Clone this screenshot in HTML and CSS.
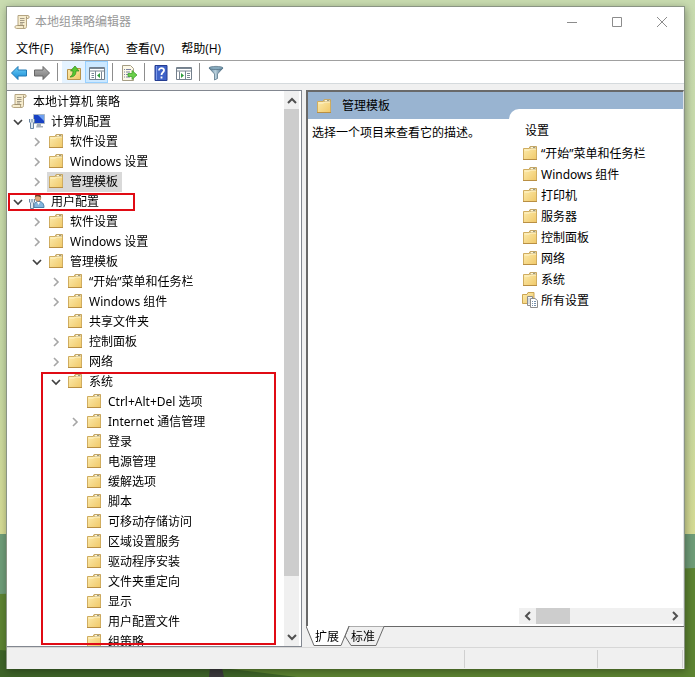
FILE: index.html
```html
<!DOCTYPE html>
<html lang="zh-CN">
<head>
    <meta charset="UTF-8">
    <meta name="viewport" content="width=device-width, initial-scale=1.0">
    <title>本地组策略编辑器</title>
    <link rel="stylesheet" href="styles.css">
</head>
<body>
    <!-- shared icons -->
    <svg class="defs" width="0" height="0">
        <defs>
            <linearGradient id="gFolder" x1="0" y1="0" x2="1" y2="1">
                <stop offset="0" stop-color="#fdedb0"/>
                <stop offset="1" stop-color="#f0c868"/>
            </linearGradient>
            <linearGradient id="gBlue" x1="0" y1="0" x2="0" y2="1">
                <stop offset="0" stop-color="#6fd0f8"/>
                <stop offset="1" stop-color="#1689d4"/>
            </linearGradient>
            <linearGradient id="gGrey" x1="0" y1="0" x2="0" y2="1">
                <stop offset="0" stop-color="#b5b5b5"/>
                <stop offset="1" stop-color="#777777"/>
            </linearGradient>
            <linearGradient id="gSteel" x1="0" y1="0" x2="1" y2="0">
                <stop offset="0" stop-color="#4e7590"/>
                <stop offset=".45" stop-color="#bcd3df"/>
                <stop offset="1" stop-color="#3f6580"/>
            </linearGradient>
        </defs>
        <symbol id="folder" viewBox="0 0 16 16">
            <path d="M1.500 3.500H7l1-2h6.500v13h-13z" fill="url(#gFolder)" stroke="#d0ad60"/>
            <path d="M8.500 1.500h5.500v2H7.800z" fill="#fff6d5" stroke="#b99b5a" stroke-width=".8"/>
            <path d="M11 2.500h2" stroke="#9a9a80"/>
            <path d="M2.500 5h5l1-1H14" fill="none" stroke="#fff5cf"/>
            <path d="M1 14.500h14" stroke="#b98f43"/>
        </symbol>
        <symbol id="scroll" viewBox="0 0 16 16">
            <path d="M4 1.500h10c1.500 0 1.500 3 0 3h-1.500v8c0 1.500-1 2-2 2h-8c-2 0-2-3 0-3H4z" fill="#f6eccd" stroke="#b5a582"/>
            <path d="M4 11.500h6c-1 1-.5 2.500.5 3M12.500 4.500v-2" fill="none" stroke="#a29372"/>
            <path d="M6 4.500h4.500M6 6.500h4.500M6 8.500h4.500M6 10h3" stroke="#8f8674" stroke-width=".8"/>
        </symbol>
        <symbol id="computer" viewBox="0 0 16 16">
            <path d="M4.500 1.500h11v9h-11z" fill="#1741c4" stroke="#a9b6c4"/>
            <path d="M9 2h6v6z" fill="#6fa0f0"/>
            <path d="M8 11h4v2h2v1.500H7z" fill="#a5afb9"/>
            <path d="M.5 6v3l1 1v5.500h3V10l1-1V6M3 6v3.500" fill="#dfe8ef" stroke="#6b87a2"/>
        </symbol>
        <symbol id="user" viewBox="0 0 16 16">
            <path d="M5 14.500c0-5 2-6 5-6s5 2 5 6z" fill="#83b5dd" stroke="#4d80aa"/>
            <ellipse cx="9" cy="4.800" rx="2.800" ry="3.500" fill="#dca97d" stroke="#9a6d4b" stroke-width=".6"/>
            <path d="M6 4c0-5 6-4 6 .5C10 3.500 8 2.500 6 4z" fill="#65442d"/>
            <path d="M8 9l1.500 3L11 9z" fill="#fff"/>
            <path d="M.5 6v3l1 1v5.500h3V10l1-1V6M3 6v3.500" fill="#dfe8ef" stroke="#6b87a2"/>
        </symbol>
        <symbol id="allset" viewBox="0 0 16 16">
            <path d="M.5 2.500H5l1-2h6v11H.5z" fill="url(#gFolder)" stroke="#cba553"/>
            <path d="M5.500 4.500h5v9h-5z" fill="#f7f7f7" stroke="#8c8c8c"/>
            <path d="M8.500 6.500H13l2.500 2v7h-7z" fill="#fff" stroke="#8c8c8c"/>
            <path d="M10 9.500h1M12 9.500h2M10 11.500h1M12 11.500h2M10 13.500h1M12 13.500h2M6.500 7h1M6.500 9h1M6.500 11h1" stroke="#7690aa"/>
        </symbol>
        <symbol id="right" viewBox="0 0 12 12">
            <path d="M4 2l4 4-4 4" fill="none" stroke="#a6a6a6" stroke-width="1.600"/>
        </symbol>
        <symbol id="down" viewBox="0 0 12 12">
            <path d="M2 4l4 4 4-4" fill="none" stroke="#404040" stroke-width="1.700"/>
        </symbol>
    </svg>

    <!-- desktop wallpaper -->
    <svg class="wallpaper" viewBox="0 0 695 677" preserveAspectRatio="none">
        <defs>
            <linearGradient id="gSky" x1="0" y1="0" x2="0" y2="1">
                <stop offset="0" stop-color="#c9dcb0"/>
                <stop offset=".7" stop-color="#c6d9a4"/>
                <stop offset="1" stop-color="#d6dc94"/>
            </linearGradient>
        </defs>
        <path d="M0 0h695v535H0z" fill="url(#gSky)"/>
        <path d="M0 534h695v70H0z" fill="#6f9d78"/>
        <path d="M0 594l695-26v109H0z" fill="#5d8432"/>
        <path d="M0 650l222 18 75 9H0z" fill="#3e6428"/>
        <path d="M210 668h12l2 9h-15z" fill="#3b393c"/>
    </svg>

    <div class="window">
        <div class="titlebar">
            <svg class="icon"><use href="#scroll"/></svg>
            <span class="title">本地组策略编辑器</span>
            <button class="winbtn" aria-label="最小化"><svg width="12" height="12"><path d="M1 6.500h10"/></svg></button>
            <button class="winbtn" aria-label="最大化"><svg width="12" height="12"><path d="M1.500 1.500h9v9h-9z"/></svg></button>
            <button class="winbtn" aria-label="关闭"><svg width="12" height="12"><path d="M1 1l10 10M11 1L1 11"/></svg></button>
        </div>

        <div class="menubar">
            <button>文件(F)</button>
            <button>操作(A)</button>
            <button>查看(V)</button>
            <button>帮助(H)</button>
        </div>

        <div class="toolbar">
            <button class="tool" aria-label="后退">
                <svg class="icon" viewBox="0 0 16 16"><path d="M.5 8L7 1.500V5h8.500v6H7v3.500z" fill="url(#gBlue)" stroke="#2379b4"/></svg>
            </button>
            <button class="tool" aria-label="前进">
                <svg class="icon" viewBox="0 0 16 16"><path d="M15.500 8L9 1.500V5H.5v6H9v3.500z" fill="url(#gGrey)" stroke="#666"/></svg>
            </button>
            <span class="sep"></span>
            <button class="tool hot" aria-label="上一级">
                <svg class="icon" viewBox="0 0 16 16">
                    <path d="M1.500 4.500H6l1-1h7.500v11h-13z" fill="url(#gFolder)" stroke="#b8934a"/>
                    <path d="M4 12c2-1 3-3 3-6H4.500L9 1l4 5h-3c0 4-2 6-6 6z" fill="#58c832" stroke="#2f8a1b" stroke-width=".7"/>
                </svg>
            </button>
            <button class="tool on" aria-label="显示/隐藏控制台树">
                <svg class="icon" viewBox="0 0 16 16">
                    <path d="M.5 2.500h15v12H.5z" fill="#fff" stroke="#74808c"/>
                    <path d="M1 3.500h14M1 6h14" stroke="#7a8794"/>
                    <path d="M6.500 6v8M2.500 8.500h2.500M2.500 10.500h2.500M2.500 12.500h2.500M12.500 6.500v8" stroke="#7a8794"/>
                    <path d="M11 8v5L8 10.500z" fill="#2f9e3d"/>
                </svg>
            </button>
            <span class="sep"></span>
            <button class="tool" aria-label="导出列表">
                <svg class="icon" viewBox="0 0 16 16">
                    <path d="M1.500.5h8l3 3v12h-11z" fill="#fdf9e8" stroke="#a59d84"/>
                    <path d="M3 4.500h1M5 4.500h5M3 7h1M5 7h4M3 9.500h1M5 9.500h2M3 12h1M5 12h4" stroke="#7d83a0"/>
                    <path d="M7 8.500h4V5.500l5 4.500-5 4.500v-3H7z" fill="#6ad04a" stroke="#369c27" stroke-width=".7"/>
                </svg>
            </button>
            <span class="sep"></span>
            <button class="tool" aria-label="帮助">
                <svg class="icon" viewBox="0 0 16 16">
                    <path d="M2 .5h12v15H2z" fill="#3e62c8" stroke="#253d91"/>
                    <path d="M3.500 1v14" stroke="#7f9be8"/>
                    <path d="M6 5.500c0-3.500 5.500-3 5 0-.3 2-2.500 2-2.500 4.500M8.500 11.500v2" fill="none" stroke="#fff" stroke-width="1.800"/>
                </svg>
            </button>
            <button class="tool" aria-label="显示/隐藏操作窗格">
                <svg class="icon" viewBox="0 0 16 16">
                    <path d="M.5 2.500h15v12H.5z" fill="#fff" stroke="#74808c"/>
                    <path d="M1 3.500h14M1 6h14" stroke="#7a8794"/>
                    <path d="M9.500 6v8M11 8.500h3M11 10.500h3M11 12.500h3M3.500 6.500v8" stroke="#7a8794"/>
                    <path d="M5 8v5l3-2.500z" fill="#2f9e3d"/>
                </svg>
            </button>
            <span class="sep"></span>
            <button class="tool" aria-label="筛选器">
                <svg class="icon" viewBox="0 0 16 16">
                    <path d="M1 3l5.500 6v6l3-1.500V9L15 3z" fill="url(#gSteel)" stroke="#4d6b80" stroke-width=".7"/>
                    <ellipse cx="8" cy="3" rx="7" ry="1.600" fill="#86a9bd" stroke="#4d6b80" stroke-width=".7"/>
                </svg>
            </button>
        </div>

        <div class="panes">
            <div class="tree-pane">
                <ul class="tree root">
                    <li>
                        <div class="node"><span class="item"><svg class="icon"><use href="#scroll"/></svg>本地计算机 策略</span></div>
                        <ul class="tree">
                            <li>
                                <div class="node"><button class="tog" aria-label="折叠"><svg><use href="#down"/></svg></button><span class="item"><svg class="icon"><use href="#computer"/></svg>计算机配置</span></div>
                                <ul class="tree">
                                    <li><div class="node"><button class="tog" aria-label="展开"><svg><use href="#right"/></svg></button><span class="item"><svg class="icon"><use href="#folder"/></svg>软件设置</span></div></li>
                                    <li><div class="node"><button class="tog" aria-label="展开"><svg><use href="#right"/></svg></button><span class="item"><svg class="icon"><use href="#folder"/></svg>Windows 设置</span></div></li>
                                    <li><div class="node"><button class="tog" aria-label="展开"><svg><use href="#right"/></svg></button><span class="item selected"><svg class="icon"><use href="#folder"/></svg>管理模板</span></div></li>
                                </ul>
                            </li>
                            <li>
                                <div class="node"><button class="tog" aria-label="折叠"><svg><use href="#down"/></svg></button><span class="item"><svg class="icon"><use href="#user"/></svg>用户配置</span></div>
                                <ul class="tree">
                                    <li><div class="node"><button class="tog" aria-label="展开"><svg><use href="#right"/></svg></button><span class="item"><svg class="icon"><use href="#folder"/></svg>软件设置</span></div></li>
                                    <li><div class="node"><button class="tog" aria-label="展开"><svg><use href="#right"/></svg></button><span class="item"><svg class="icon"><use href="#folder"/></svg>Windows 设置</span></div></li>
                                    <li>
                                        <div class="node"><button class="tog" aria-label="折叠"><svg><use href="#down"/></svg></button><span class="item"><svg class="icon"><use href="#folder"/></svg>管理模板</span></div>
                                        <ul class="tree">
                                            <li><div class="node"><button class="tog" aria-label="展开"><svg><use href="#right"/></svg></button><span class="item"><svg class="icon"><use href="#folder"/></svg>“开始”菜单和任务栏</span></div></li>
                                            <li><div class="node"><button class="tog" aria-label="展开"><svg><use href="#right"/></svg></button><span class="item"><svg class="icon"><use href="#folder"/></svg>Windows 组件</span></div></li>
                                            <li><div class="node leaf"><span class="item"><svg class="icon"><use href="#folder"/></svg>共享文件夹</span></div></li>
                                            <li><div class="node"><button class="tog" aria-label="展开"><svg><use href="#right"/></svg></button><span class="item"><svg class="icon"><use href="#folder"/></svg>控制面板</span></div></li>
                                            <li><div class="node"><button class="tog" aria-label="展开"><svg><use href="#right"/></svg></button><span class="item"><svg class="icon"><use href="#folder"/></svg>网络</span></div></li>
                                            <li>
                                                <div class="node"><button class="tog" aria-label="折叠"><svg><use href="#down"/></svg></button><span class="item"><svg class="icon"><use href="#folder"/></svg>系统</span></div>
                                                <ul class="tree">
                                                    <li><div class="node leaf"><span class="item"><svg class="icon"><use href="#folder"/></svg>Ctrl+Alt+Del 选项</span></div></li>
                                                    <li><div class="node"><button class="tog" aria-label="展开"><svg><use href="#right"/></svg></button><span class="item"><svg class="icon"><use href="#folder"/></svg>Internet 通信管理</span></div></li>
                                                    <li><div class="node leaf"><span class="item"><svg class="icon"><use href="#folder"/></svg>登录</span></div></li>
                                                    <li><div class="node leaf"><span class="item"><svg class="icon"><use href="#folder"/></svg>电源管理</span></div></li>
                                                    <li><div class="node leaf"><span class="item"><svg class="icon"><use href="#folder"/></svg>缓解选项</span></div></li>
                                                    <li><div class="node leaf"><span class="item"><svg class="icon"><use href="#folder"/></svg>脚本</span></div></li>
                                                    <li><div class="node leaf"><span class="item"><svg class="icon"><use href="#folder"/></svg>可移动存储访问</span></div></li>
                                                    <li><div class="node leaf"><span class="item"><svg class="icon"><use href="#folder"/></svg>区域设置服务</span></div></li>
                                                    <li><div class="node leaf"><span class="item"><svg class="icon"><use href="#folder"/></svg>驱动程序安装</span></div></li>
                                                    <li><div class="node leaf"><span class="item"><svg class="icon"><use href="#folder"/></svg>文件夹重定向</span></div></li>
                                                    <li><div class="node leaf"><span class="item"><svg class="icon"><use href="#folder"/></svg>显示</span></div></li>
                                                    <li><div class="node leaf"><span class="item"><svg class="icon"><use href="#folder"/></svg>用户配置文件</span></div></li>
                                                    <li><div class="node leaf"><span class="item"><svg class="icon"><use href="#folder"/></svg>组策略</span></div></li>
                                                </ul>
                                            </li>
                                        </ul>
                                    </li>
                                </ul>
                            </li>
                        </ul>
                    </li>
                </ul>
                <div class="vscroll">
                    <button aria-label="向上滚动"><svg width="10" height="10"><path d="M1 7l4-4 4 4"/></svg></button>
                    <div class="track"><div class="thumb"></div></div>
                    <button aria-label="向下滚动"><svg width="10" height="10"><path d="M1 3l4 4 4-4"/></svg></button>
                </div>
                <!-- red highlight boxes -->
                <div class="mark mark-user"></div>
                <div class="mark mark-system"></div>
            </div>

            <div class="right">
                <div class="detail">
                    <div class="info">
                        <h2><svg class="icon"><use href="#folder"/></svg>管理模板</h2>
                        <p>选择一个项目来查看它的描述。</p>
                    </div>
                    <div class="settings">
                        <h3>设置</h3>
                        <ul class="list">
                            <li><svg class="icon"><use href="#folder"/></svg>“开始”菜单和任务栏</li>
                            <li><svg class="icon"><use href="#folder"/></svg>Windows 组件</li>
                            <li><svg class="icon"><use href="#folder"/></svg>打印机</li>
                            <li><svg class="icon"><use href="#folder"/></svg>服务器</li>
                            <li><svg class="icon"><use href="#folder"/></svg>控制面板</li>
                            <li><svg class="icon"><use href="#folder"/></svg>网络</li>
                            <li><svg class="icon"><use href="#folder"/></svg>系统</li>
                            <li><svg class="icon"><use href="#allset"/></svg>所有设置</li>
                        </ul>
                        <div class="hscroll">
                            <button aria-label="向左滚动"><svg width="10" height="10"><path d="M7 1L3 5l4 4"/></svg></button>
                            <div class="track"><div class="thumb"></div></div>
                            <button aria-label="向右滚动"><svg width="10" height="10"><path d="M3 1l4 4-4 4"/></svg></button>
                        </div>
                    </div>
                </div>
                <div class="tabs">
                    <svg class="tabshape" width="80" height="21">
                        <path d="M43 .5L39 10l6 9.500h25L78 .5" fill="#f0f0f0" stroke="#696969"/>
                        <path d="M0 0l8 19.500h27L43 0" fill="#fff" stroke="#696969"/>
                    </svg>
                    <button>扩展</button>
                    <button>标准</button>
                </div>
            </div>
        </div>

        <div class="statusbar">
            <span class="cell main"></span>
            <span class="cell mid"></span>
            <span class="cell end"></span>
        </div>
    </div>
</body>
</html>
```
FILE: styles.css
```css
*{
    padding: 0;
    margin: 0;
    box-sizing: border-box;
}
body{
    height: 100vh;
    padding: 6px 10px 8px 6px;
    overflow: hidden;
    font-family: "Open Sans", "Noto Sans CJK SC", sans-serif;
    font-size: 12px;
    line-height: 20px;
    color: #000;
}
button{
    font: inherit;
    color: inherit;
    border: none;
    background: none;
}
ul{
    list-style: none;
}
svg{
    display: block;
    flex: none;
}
.defs{
    position: absolute;
}
.wallpaper{
    position: fixed;
    inset: 0;
    width: 100%;
    height: 100%;
    z-index: -1;
}
.icon{
    width: 16px;
    height: 16px;
}
.window{
    height: 100%;
    display: flex;
    flex-direction: column;
    background: #f0f0f0;
    border: 1px solid #8a9484;
    border-bottom: none;
    box-shadow: 1px 2px 8px rgba(0, 0, 0, 0.35);
}

/* title bar */
.titlebar{
    height: 30px;
    display: flex;
    align-items: center;
    padding-left: 7px;
    background: #fff;
    color: #999;
}
.title{
    flex: 1;
    padding-left: 5px;
}
.winbtn{
    width: 45px;
    height: 28px;
    display: flex;
    align-items: center;
    justify-content: center;
}
.winbtn svg{
    fill: none;
    stroke: #8c8c8c;
}

/* menu */
.menubar{
    height: 24px;
    display: flex;
    align-items: center;
    gap: 17px;
    padding-left: 9px;
    background: #fff;
    border-bottom: 1px solid #a0a0a0;
}

/* toolbar */
.toolbar{
    height: 23px;
    display: flex;
    align-items: center;
    background: #fff;
    border-bottom: 1px solid #d5dadd;
}
.tool{
    width: 23px;
    height: 22px;
    display: flex;
    align-items: center;
    justify-content: center;
    padding-top: 2px;
}
.hot{
    background: #e5f3ff;
}
.on{
    background: #cce8ff;
    border: 1px solid #99d1ff;
}
.sep{
    width: 1px;
    height: 18px;
    margin: 0 4px;
    background: #8d8d8d;
}

/* panes */
.panes{
    flex: 1;
    min-height: 0;
    display: flex;
    gap: 4px;
    padding-top: 6px;
    font-family: "Noto Sans", "Noto Sans CJK SC", sans-serif;
}
.tree-pane{
    position: relative;
    flex: 0 0 295px;
    display: flex;
    overflow: hidden;
    padding-right: 2px;
    background: #fff;
    border: 1px solid #828790;
    border-left: none;
}
.tree{
    padding-left: 19px;
}
.tree.root{
    flex: 1;
    padding: 1px 0 0;
    overflow: hidden;
}
.tree.root > li > .node{
    padding-left: 3px;
}
.tree.root > li > .tree{
    padding-left: 5px;
}
.node{
    height: 20px;
    display: flex;
    align-items: center;
}
.leaf{
    padding-left: 16px;
}
.tog{
    width: 12px;
    height: 12px;
    margin-right: 4px;
}
.tog svg{
    width: 12px;
    height: 12px;
}
.item{
    display: flex;
    align-items: center;
    gap: 6px;
    height: 20px;
    padding: 0 4px 0 1px;
    white-space: nowrap;
}
.item .icon,
.list .icon{
    margin-bottom: 2px;
}
.selected{
    background: #d9d9d9;
}
.mark{
    position: absolute;
    border: 2px solid #e00b14;
}
.mark-user{
    top: 102px;
    left: 1px;
    width: 127px;
    height: 18px;
}
.mark-system{
    top: 281px;
    right: 25px;
    bottom: 1px;
    left: 34px;
}

/* scrollbars */
.vscroll{
    width: 15px;
    display: flex;
    flex-direction: column;
    padding: 1px 0;
    background: #f0f0f0;
}
.hscroll{
    height: 16px;
    display: flex;
    margin: auto 0 2px 10px;
    background: #f0f0f0;
}
.vscroll button,
.hscroll button{
    flex: 0 0 17px;
    display: flex;
    align-items: center;
    justify-content: center;
}
.vscroll button svg,
.hscroll button svg{
    fill: none;
    stroke: #505050;
    stroke-width: 2;
}
.track{
    flex: 1;
}
.thumb{
    background: #cdcdcd;
}
.vscroll .thumb{
    height: 90%;
}
.hscroll .thumb{
    width: 26%;
    height: 100%;
}

/* right side */
.right{
    flex: 1;
    min-width: 0;
    display: flex;
    flex-direction: column;
}
.detail{
    flex: 1;
    display: flex;
    background: #99b4d1;
    border: 1px solid #696969;
    border-width: 2px 0 0 2px;
    border-right: 1px solid #dfe3e6;
}
.info{
    flex: 0 0 201px;
    display: flex;
    flex-direction: column;
}
.info h2{
    height: 27px;
    display: flex;
    align-items: center;
    gap: 10px;
    padding-left: 8px;
    font-size: 12px;
    font-weight: normal;
}
.info p{
    flex: 1;
    padding: 4px;
    background: #fff;
    white-space: nowrap;
}
.settings{
    flex: 1;
    display: flex;
    flex-direction: column;
    margin-top: 17px;
    padding-top: 12px;
    background: #fff;
    border-top-left-radius: 10px;
}
.settings h3{
    padding-left: 16px;
    font-size: 12px;
    font-weight: normal;
}
.list{
    padding: 2px 0 0 13px;
}
.list li{
    height: 21px;
    display: flex;
    align-items: center;
    gap: 3px;
}
.tabs{
    position: relative;
    height: 21px;
    display: flex;
    gap: 12px;
    padding-left: 9px;
    border-top: 1px solid #696969;
}
.tabs button{
    position: relative;
}
.tabshape{
    position: absolute;
    top: -1px;
    left: 0;
}

/* status bar */
.statusbar{
    height: 22px;
    display: flex;
    border-top: 1px solid #d7d7d7;
}
.cell{
    margin: 2px 0 1px;
    border-right: 1px solid #d0d0d0;
}
.cell.main{
    flex: 1;
}
.cell.mid{
    flex: 0 0 133px;
}
.cell.end{
    flex: 0 0 85px;
    margin-right: 1px;
}
```
